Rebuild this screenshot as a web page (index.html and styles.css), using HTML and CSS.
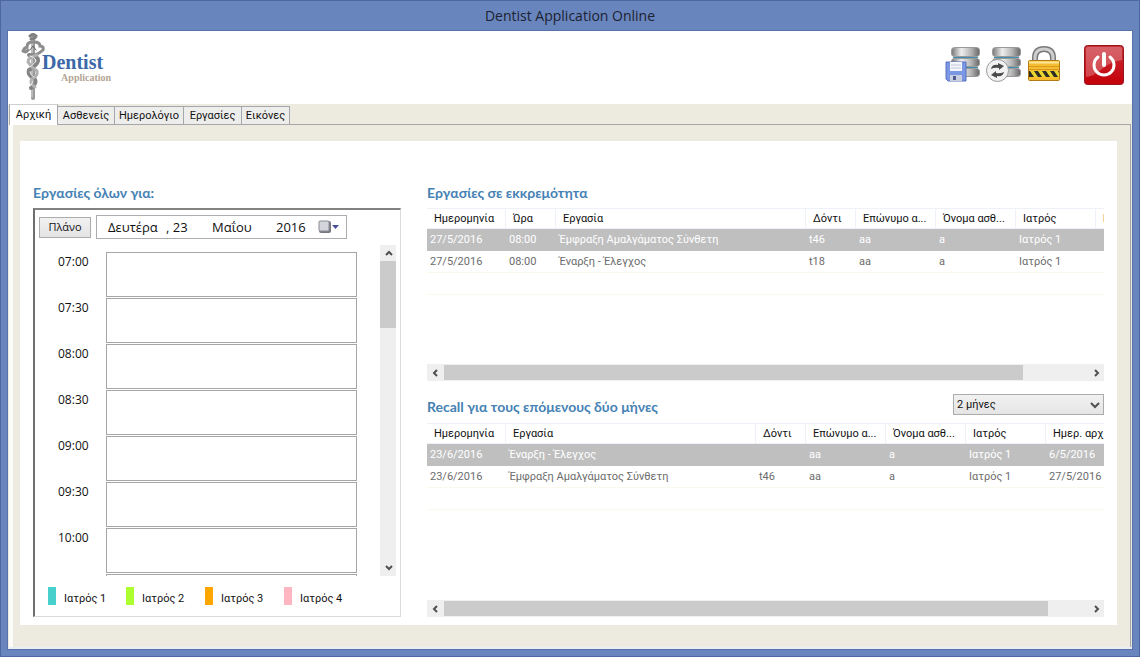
FILE: index.html
```
<!DOCTYPE html>
<html lang="el">
<head>
<meta charset="utf-8">
<title>Dentist Application Online</title>
<link rel="stylesheet" href="styles.css">
</head>
<body>
<div class="window">
  <div class="titlebar">Dentist Application Online</div>
  <div class="client">
    <header class="header">
      <div class="logo">
        <svg class="logo-mark" width="24" height="68" viewBox="0 0 24 68" fill="none" stroke-linecap="round" aria-hidden="true">
          <path d="M12 4V65" stroke="#9a9a9a" stroke-width="4"/>
          <path d="M11 5V64" stroke="#dcdcdc" stroke-width="1"/>
          <path d="M9 3Q12 0 15 3Q14 6 10 6" stroke="#808080" stroke-width="3"/>
          <path d="M11 9Q6 9 6 14Q3 15 2 18M13 9Q19 9 19 13Q23 13 22 17Q19 20 14 22M2 18Q5 20 7 17" stroke="#8d8d8d" stroke-width="3"/>
          <path d="M8 22Q17 22 17 28Q16 32 8 37Q6 42 13 45Q17 50 10 55" stroke="#848484" stroke-width="4"/>
          <path d="M16 22Q7 24 7 29Q10 34 16 38Q17 43 11 46Q8 50 14 54" stroke="#b0b0b0" stroke-width="3"/>
          <path d="M9 23Q14 24 15 28Q14 30 9 34M9 39Q10 43 13 44M12 48L10 52" stroke="#eee" stroke-width="1"/>
          <path d="M9 17L12 13L15 17" stroke="#666" stroke-width="1"/>
        </svg>
        <div class="logo-text"><span class="logo-name">Dentist</span><span class="logo-sub">Application</span></div>
      </div>
      <div class="tools">
        <button class="tool" aria-label="Save data">
          <svg width="36" height="38" viewBox="0 0 36 38">
            <defs>
              <linearGradient id="metal"><stop offset="0" stop-color="#777"/><stop offset=".35" stop-color="#eee"/><stop offset=".7" stop-color="#b5b5b5"/><stop offset="1" stop-color="#666"/></linearGradient>
            </defs>
            <g fill="url(#metal)" stroke="#9a9a9a"><rect x="6.500" y="1.500" width="28" height="9" rx="3"/><rect x="6.500" y="12.500" width="28" height="8" rx="3"/><rect x="6.500" y="22.500" width="28" height="8" rx="3"/></g>
            <path d="M8 11.500H33M8 21.500H33" stroke="#3c8fae"/>
            <path d="M1 16H21V35H3L1 33Z" fill="#7b97e4" stroke="#5a72c2"/>
            <rect x="5" y="16" width="12" height="9" fill="#f3f5fb"/><path d="M6 19H16M6 22H16" stroke="#c3c9da"/>
            <rect x="5" y="29" width="12" height="6" fill="#c9cfdf"/><rect x="8" y="30" width="3" height="4" fill="#4f5d94"/>
          </svg>
        </button>
        <button class="tool" aria-label="Refresh data">
          <svg width="36" height="38" viewBox="0 0 36 38">
            <g fill="url(#metal)" stroke="#9a9a9a"><rect x="6.500" y="1.500" width="28" height="9" rx="3"/><rect x="6.500" y="12.500" width="28" height="8" rx="3"/><rect x="6.500" y="22.500" width="28" height="8" rx="3"/></g>
            <path d="M8 11.500H33M8 21.500H33" stroke="#3c8fae"/>
            <circle cx="11.500" cy="24.500" r="11" fill="#f2f2f2" stroke="#999"/>
            <path d="M5 23Q6 18 12 19L12 17L18 20L13 24L13 22Q9 21 5 23ZM18 26Q17 31 11 30L11 32L5 29L10 25L10 27Q14 28 18 26Z" fill="#4a4a4a"/>
          </svg>
        </button>
        <button class="tool" aria-label="Lock">
          <svg width="36" height="38" viewBox="0 0 36 38">
            <path d="M8 15V12Q8 3 17 3T26 12V15" fill="none" stroke="#787878" stroke-width="6"/>
            <path d="M8 15V12Q8 3 17 3T26 12V15" fill="none" stroke="#cfcfcf" stroke-width="3"/>
            <rect x="1.500" y="14.500" width="31" height="20" rx="1" fill="#f5bd2f" stroke="#b37a16"/>
            <path d="M2 16.500H32" stroke="#ffe79b" stroke-width="2"/><path d="M2 20.500H32M2 23.500H32" stroke="#d99a1d"/>
            <path d="M2 25H32V31H2Z" fill="#2c2b26"/>
            <path d="M3 25H7L11 31H7ZM11 25H15L19 31H15ZM19 25H23L27 31H23ZM27 25H31L32 27V31H31Z" fill="#e8d52d"/>
          </svg>
        </button>
        <button class="tool tool-power" aria-label="Exit">
          <svg width="40" height="40" viewBox="0 0 40 40">
            <defs><linearGradient id="red" x2="0" y2="1"><stop offset="0" stop-color="#c83038"/><stop offset="1" stop-color="#c40009"/></linearGradient></defs>
            <rect x=".5" y=".5" width="39" height="39" rx="3" fill="url(#red)" stroke="#97141a"/>
            <path d="M2 4Q2 2 4 2H36Q38 2 38 4V15Q26 17 18 24T2 32Z" fill="#fff" opacity=".25"/>
            <path d="M14 12A10 10 0 1 0 26 12" fill="none" stroke="#fff" stroke-width="3" stroke-linecap="round"/>
            <path d="M20 9V20" stroke="#fff" stroke-width="4" stroke-linecap="round"/>
          </svg>
        </button>
      </div>
    </header>

    <nav class="tabs" role="tablist">
      <button class="tab tab-active" role="tab" aria-selected="true">Αρχική</button>
      <button class="tab" role="tab">Ασθενείς</button>
      <button class="tab" role="tab">Ημερολόγιο</button>
      <button class="tab" role="tab">Εργασίες</button>
      <button class="tab" role="tab">Εικόνες</button>
    </nav>

    <main class="tab-page">
      <div class="sheet">
        <section class="day">
          <h2 class="heading">Εργασίες όλων για:</h2>
          <div class="day-panel">
            <div class="day-bar">
              <button class="plan">Πλάνο</button>
              <button class="date">
                <span>Δευτέρα</span><span>, 23</span><span>Μαΐου</span><span>2016</span>
                <svg width="22" height="14" viewBox="0 0 22 14" aria-hidden="true"><rect x="1" y="1" width="12" height="12" rx="2" fill="#77777f"/><rect x="1" y="1" width="10" height="10" rx="1" fill="#d3d5da" stroke="#8b8d96"/><path d="M14 5H21L17.500 9Z" fill="#4c4f9b"/></svg>
              </button>
            </div>
            <div class="agenda">
              <ol class="slots">
                <li class="slot"><time>07:00</time><div class="slot-box"></div></li>
                <li class="slot"><time>07:30</time><div class="slot-box"></div></li>
                <li class="slot"><time>08:00</time><div class="slot-box"></div></li>
                <li class="slot"><time>08:30</time><div class="slot-box"></div></li>
                <li class="slot"><time>09:00</time><div class="slot-box"></div></li>
                <li class="slot"><time>09:30</time><div class="slot-box"></div></li>
                <li class="slot"><time>10:00</time><div class="slot-box"></div></li>
                <li class="slot"><div class="slot-box"></div></li>
              </ol>
              <div class="vscroll">
                <button class="scroll-btn" aria-label="Up"><svg width="10" height="10" viewBox="0 0 10 10"><path d="M2 7L5 4L8 7"/></svg></button>
                <div class="vthumb"></div>
                <button class="scroll-btn scroll-end" aria-label="Down"><svg width="10" height="10" viewBox="0 0 10 10"><path d="M2 3L5 6L8 3"/></svg></button>
              </div>
            </div>
            <ul class="legend">
              <li><i class="swatch teal"></i>Ιατρός 1</li>
              <li><i class="swatch lime"></i>Ιατρός 2</li>
              <li><i class="swatch orange"></i>Ιατρός 3</li>
              <li><i class="swatch pink"></i>Ιατρός 4</li>
            </ul>
          </div>
        </section>

        <div class="lists">
          <section class="pending">
            <h2 class="heading">Εργασίες σε εκκρεμότητα</h2>
            <div class="grid">
              <table class="pending-table">
                <colgroup><col class="w79"><col class="w50"><col class="w250"><col class="w50"><col class="w80"><col class="w80"><col class="w80"><col class="w80"></colgroup>
                <thead><tr><th>Ημερομηνία</th><th>Ώρα</th><th>Εργασία</th><th>Δόντι</th><th>Επώνυμο α...</th><th>Όνομα ασθ...</th><th>Ιατρός</th><th>Ημερ. αρχική</th></tr></thead>
                <tbody>
                  <tr class="selected"><td>27/5/2016</td><td>08:00</td><td>Έμφραξη Αμαλγάματος Σύνθετη</td><td>t46</td><td>aa</td><td>a</td><td>Ιατρός 1</td><td></td></tr>
                  <tr><td>27/5/2016</td><td>08:00</td><td>Έναρξη - Έλεγχος</td><td>t18</td><td>aa</td><td>a</td><td>Ιατρός 1</td><td></td></tr>
                  <tr><td colspan="8"></td></tr>
                </tbody>
              </table>
            </div>
            <div class="hscroll">
              <button class="scroll-btn" aria-label="Left"><svg width="10" height="10" viewBox="0 0 10 10"><path d="M6 2L3 5L6 8"/></svg></button>
              <div class="track"><div class="hthumb" style="width:90%"></div></div>
              <button class="scroll-btn" aria-label="Right"><svg width="10" height="10" viewBox="0 0 10 10"><path d="M4 2L7 5L4 8"/></svg></button>
            </div>
          </section>

          <section class="recall">
            <div class="recall-bar">
              <h2 class="heading" id="recall-title">Recall για τους επόμενους δύο μήνες</h2>
              <div class="combo">
                <select aria-labelledby="recall-title"><option>2 μήνες</option></select>
                <svg width="10" height="10" viewBox="0 0 10 10" aria-hidden="true"><path d="M1 3L5 7L9 3"/></svg>
              </div>
            </div>
            <div class="grid">
              <table class="recall-table">
                <colgroup><col class="w79"><col class="w250"><col class="w50"><col class="w80"><col class="w80"><col class="w80"><col class="w80"></colgroup>
                <thead><tr><th>Ημερομηνία</th><th>Εργασία</th><th>Δόντι</th><th>Επώνυμο α...</th><th>Όνομα ασθ...</th><th>Ιατρός</th><th>Ημερ. αρχική</th></tr></thead>
                <tbody>
                  <tr class="selected"><td>23/6/2016</td><td>Έναρξη - Έλεγχος</td><td></td><td>aa</td><td>a</td><td>Ιατρός 1</td><td>6/5/2016</td></tr>
                  <tr><td>23/6/2016</td><td>Έμφραξη Αμαλγάματος Σύνθετη</td><td>t46</td><td>aa</td><td>a</td><td>Ιατρός 1</td><td>27/5/2016</td></tr>
                  <tr><td colspan="7"></td></tr>
                </tbody>
              </table>
            </div>
            <div class="hscroll">
              <button class="scroll-btn" aria-label="Left"><svg width="10" height="10" viewBox="0 0 10 10"><path d="M6 2L3 5L6 8"/></svg></button>
              <div class="track"><div class="hthumb" style="width:94%"></div></div>
              <button class="scroll-btn" aria-label="Right"><svg width="10" height="10" viewBox="0 0 10 10"><path d="M4 2L7 5L4 8"/></svg></button>
            </div>
          </section>
        </div>
      </div>
    </main>
  </div>
</div>
</body>
</html>
```
FILE: styles.css
```
* { box-sizing: border-box; }
body { margin: 0; font: 11px/16px Roboto, "Noto Sans", sans-serif; color: #111; }
button { font: inherit; color: inherit; padding: 0; border: 0; background: none; }
ul, ol { list-style: none; margin: 0; padding: 0; }

.window {
  display: flex; flex-direction: column; min-height: 100vh;
  padding: 0 7px 7px; background: #6985be; border: 1px solid #4c67a3;
}
.titlebar { height: 30px; font: 14px/30px "Open Sans", sans-serif; text-align: center; color: #1c2231; }
.client {
  flex: 1; display: flex; flex-direction: column;
  background: #edeae0; outline: 1px solid #5872ac; border-bottom: 2px solid #e9eef6;
}

.header {
  display: flex; justify-content: space-between; align-items: flex-start;
  height: 73px; padding: 2px 8px 0 13px; background: #fff;
}
.logo { display: flex; align-items: flex-start; }
.logo-text { display: flex; flex-direction: column; align-items: flex-end; margin-left: -3px; padding-top: 18px; }
.logo-name { font: bold 20px/22px "Liberation Serif", serif; color: #3c68a8; }
.logo-sub { font: bold 10px/10px "Liberation Serif", serif; color: #b3a593; margin-right: -8px; }
.tools { display: flex; gap: 5px; padding-top: 12px; }
.tool { display: block; height: 40px; }
.tool svg { display: block; }
.tool-power { margin-left: 16px; }

.tabs { display: grid; grid-template-columns: 49px 57px 69px 58px 48px; align-items: end; height: 20px; padding-left: 1px; }
.tab {
  height: 18px; line-height: 16px; text-align: center;
  background: #ededec; border: 1px solid #a5a7ad; border-width: 1px 1px 0 0;
}
.tab-active { height: 21px; margin-bottom: -1px; background: #fff; border-left-width: 1px; border-color: #d0d0d0 #a5a7ad; z-index: 1; }

.tab-page {
  flex: 1; display: flex; margin: 0 1px; padding: 16px 13px 22px 7px;
  border: 1px solid #a5a7ad; border-width: 1px 1px 0; border-left: 4px solid #fbfbfa;
}
.sheet { flex: 1; display: flex; gap: 26px; padding: 42px 13px 8px; background: #fff; min-width: 0; }
.heading { margin: 0; font: bold 14px/20px Lato, "Open Sans", sans-serif; color: #4682b4; }

.day { flex: none; width: 368px; display: flex; flex-direction: column; }
.day-panel {
  flex: 1; display: flex; flex-direction: column; margin-top: 5px; padding: 5px 4px 0 4px;
  border: 1px solid #dcdcdc; border-top: 2px solid #828282; border-left: 2px solid #6e6e6e;
}
.day-bar { display: flex; align-items: center; gap: 5px; }
.plan { width: 52px; height: 21px; background: linear-gradient(#f1f1f1, #e4e4e4); border: 1px solid #acacac; font: 11px/18px "Open Sans", sans-serif; }
.date {
  display: grid; grid-template-columns: 58px 46px 64px 42px 22px; align-items: center; text-align: left;
  width: 251px; height: 24px; padding-left: 11px; border: 1px solid #abadb3; background: #fff;
  font: 13px/20px "Open Sans", sans-serif;
}
.agenda { display: flex; justify-content: space-between; height: 331px; margin-top: 6px; }
.slots { overflow: hidden; width: 318px; height: 331px; padding-top: 7px; }
.slot { display: flex; height: 46px; }
.slot time { padding-left: 19px; font: 12px/20px "Open Sans", sans-serif; }
.slot-box { width: 251px; height: 45px; margin-left: auto; border: 1px solid #a6a6a6; background: #fff; }

.vscroll { display: flex; flex-direction: column; width: 16px; background: #efefef; }
.vthumb { height: 67px; background: #cbcbcb; }
.scroll-btn { display: flex; align-items: center; justify-content: center; width: 17px; height: 16px; flex: none; }
.scroll-end { margin-top: auto; }
.scroll-btn path, .combo path { fill: none; stroke: #505050; stroke-width: 2; }

.legend { display: grid; grid-template-columns: 78px 79px 79px 79px; padding: 11px 0 0 9px; }
.legend li { display: flex; gap: 8px; height: 24px; line-height: 24px; }
.swatch { width: 8px; height: 18px; }
.teal { background: #48d1cc; }
.lime { background: #adff2f; }
.orange { background: #ffa500; }
.pink { background: #ffb6c1; }

.lists { flex: 1; min-width: 0; display: flex; flex-direction: column; }
.pending { display: flex; flex-direction: column; height: 198px; }
.recall { flex: 1; display: flex; flex-direction: column; }
.recall-bar { display: flex; justify-content: space-between; align-items: flex-end; height: 42px; padding-bottom: 6px; }
.combo { position: relative; width: 151px; height: 21px; margin-bottom: 2px; }
.combo select {
  appearance: none; display: block; width: 100%; height: 21px; padding: 0 3px;
  border: 1px solid #acacac; border-radius: 0; background: linear-gradient(#f1f1f1, #e5e5e5);
  font: 11px/18px Roboto, "Noto Sans", sans-serif; color: #111;
}
.combo svg { position: absolute; right: 4px; top: 6px; pointer-events: none; }

.grid { flex: 1; overflow: hidden; }
.pending .grid { margin-top: 5px; }
table { table-layout: fixed; border-collapse: separate; border-spacing: 0; }
.pending-table { width: 749px; }
.recall-table { width: 699px; }
.w50 { width: 50px; }
.w79 { width: 79px; }
.w80 { width: 80px; }
.w250 { width: 250px; }
th, td { height: 22px; padding: 0 3px; text-align: left; white-space: nowrap; border-bottom: 1px solid #fbf8ec; }
th { height: 21px; padding: 0 0 0 7px; font-weight: 400; border: 1px solid #eef2f8; border-width: 1px 1px 1px 0; }
td { color: #6c6c6c; }
.selected td { background: #bfbfbf; color: #fff; border-bottom-color: #bfbfbf; }

.hscroll { display: flex; height: 17px; background: #efefef; align-items: center; }
.track { flex: 1; }
.hthumb { height: 15px; background: #cbcbcb; }
```
